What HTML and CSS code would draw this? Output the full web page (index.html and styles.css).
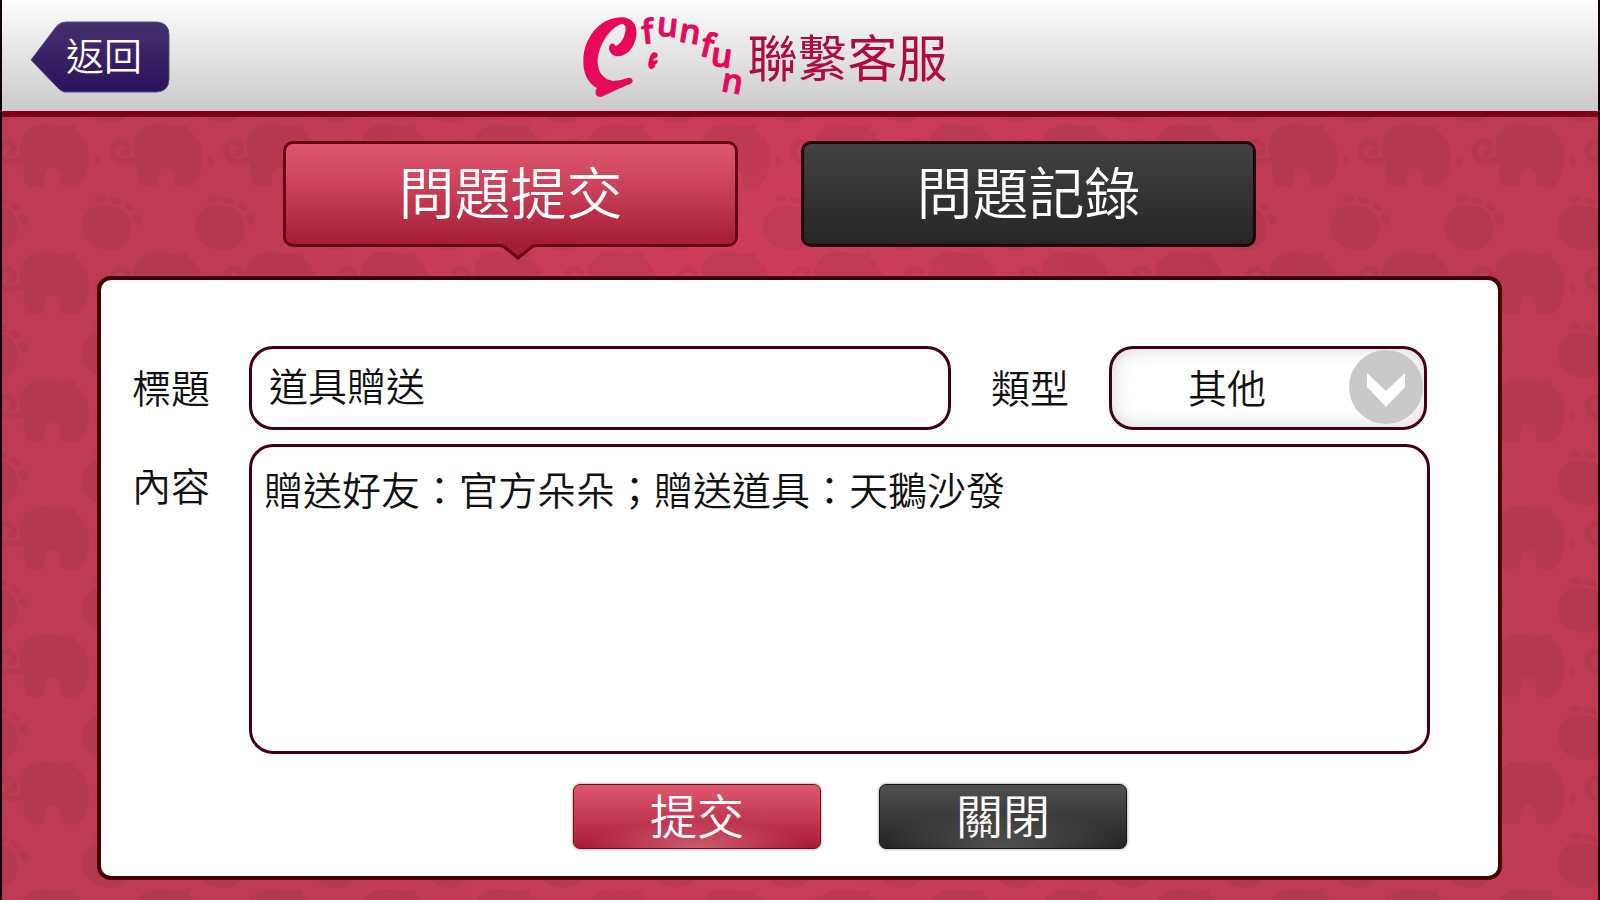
FILE: index.html
```html
<!DOCTYPE html>
<html lang="zh-Hant">
<head>
    <meta charset="UTF-8">
    <meta name="viewport" content="width=device-width, initial-scale=1.0">
    <title>聯繫客服</title>
    <link rel="stylesheet" href="styles.css">
</head>
<body>
    <header class="top-bar">
        <a class="back" href="#">
            <svg class="back-shape" viewBox="0 0 140 72" aria-hidden="true">
                <defs>
                    <linearGradient id="backFill" x1="0" y1="0" x2="0" y2="1">
                        <stop offset="0" stop-color="#462f70"/>
                        <stop offset="1" stop-color="#29125c"/>
                    </linearGradient>
                </defs>
                <path d="M1 39 L26 6 Q30 1 36 1 H127 Q139 2 139 14 V58 Q139 70 127 71 H34 Q31 70 28 67 Z" fill="url(#backFill)" stroke="#4a5680" stroke-width="1"/>
            </svg>
            <span class="back-text">返回</span>
        </a>
        <div class="brand">
            <svg class="logo" viewBox="70 45 480 249" role="img" aria-label="efunfun">
                <path d="M118 290 C104 288 106 272 112 265 C80 245 70 215 71 180 C72 120 115 52 188 52 C222 54 234 80 230 108 C224 145 200 170 172 169 C152 167 144 148 150 136 C156 126 166 132 168 138 C185 132 196 110 198 88 C199 74 192 70 180 74 C140 92 112 150 114 190 C116 225 140 240 160 243 C180 242 195 236 206 233 C220 232 224 246 212 252 C185 262 150 280 126 290 Z"/>
                <path d="M282 157 C294 156 297 166 292 172 L282 176 L281 183 L293 180 C297 186 290 192 286 194 C286 204 280 208 274 207 C265 204 264 194 268 180 C270 168 275 159 282 157 Z"/>
                <text x="249 289 355 417 450 482" y="132 106 124 166 196 272" rotate="-6 6 9 14 8 10">funfun</text>
            </svg>
            <h1>聯繫客服</h1>
        </div>
    </header>

    <main>
        <nav class="tabs">
            <button type="button" class="tab active">問題提交
                <svg class="pointer" viewBox="0 0 34 17" aria-hidden="true">
                    <path d="M0 0 H34 V2 L17 15 L0 2 Z" fill="#a51c35"/>
                    <path d="M0 2 H2 L17 14 L32 2 H34" fill="none" stroke="#65000b" stroke-width="3"/>
                </svg>
            </button>
            <button type="button" class="tab">問題記錄</button>
        </nav>

        <form class="panel">
            <div class="row">
                <label class="row-label" for="title">標題</label>
                <div class="fields">
                    <input type="text" id="title" value="道具贈送">
                    <label for="type">類型</label>
                    <div class="select-box">
                        <select id="type">
                            <option>其他</option>
                        </select>
                        <svg class="arrow" viewBox="0 0 74 74" aria-hidden="true">
                            <circle cx="37" cy="37" r="37" fill="#c9c9c9"/>
                            <path d="M18 23 L37 41 L56 23 V37 L37 57 L18 37 Z" fill="#fff"/>
                        </svg>
                    </div>
                </div>
            </div>
            <div class="row row-content">
                <label class="row-label" for="content">內容</label>
                <textarea id="content">贈送好友：官方朵朵；贈送道具：天鵝沙發</textarea>
            </div>
            <div class="actions">
                <button type="button" class="btn btn-submit">提交</button>
                <button type="button" class="btn btn-close">關閉</button>
            </div>
        </form>
    </main>
</body>
</html>
```
FILE: styles.css
```css
* { box-sizing: border-box; }
body {
    margin: 0;
    min-height: 100vh;
    display: flex;
    flex-direction: column;
    border: solid #120208;
    border-width: 0 2px;
    font-family: "Noto Sans CJK TC", sans-serif;
    font-weight: 350;
    color: #111;
}
button, input, select, textarea {
    font: inherit;
    color: inherit;
}

/* Header */
.top-bar {
    display: grid;
    grid-template-columns: 1fr auto 1fr;
    align-items: center;
    height: 117px;
    padding: 2px 98px 0 28px;
    background: linear-gradient(#fdfdfd, #cacaca);
    border-bottom: 6px solid #80001a;
}
.back {
    position: relative;
    width: 140px;
    height: 72px;
    padding-left: 36px;
    color: #fff;
    font-size: 38px;
    line-height: 66px;
    text-decoration: none;
}
.back-shape {
    position: absolute;
    inset: 0;
    width: 100%;
    height: 100%;
}
.back-text { position: relative; }
.brand {
    display: flex;
    align-items: center;
}
.logo {
    width: 160px;
    height: 83px;
    overflow: visible;
    fill: #e8085a;
    font-family: "Open Sans", sans-serif;
    font-size: 100px;
    font-weight: 600;
}
.logo text {
    stroke: #e8085a;
    stroke-width: 3px;
    stroke-linejoin: round;
}
h1 {
    margin: 0 0 4px 5px;
    color: #ad0b42;
    font-size: 50px;
    font-weight: 400;
    line-height: 60px;
}

/* Patterned area */
main {
    flex: 1;
    display: flex;
    flex-direction: column;
    padding: 24px 96px 20px 95px;
    background:
        url("data:image/svg+xml,%3Csvg xmlns='http://www.w3.org/2000/svg' width='227' height='255' viewBox='0 0 681 765'%3E%3Cdefs%3E%3Cg id='e'%3E%3Cpath d='M73 80C73 25 110 2 150 4C175 4 195 14 215 8L243 4L238 22C265 35 281 70 281 100C281 150 265 172 250 190C225 198 205 190 196 186V160C196 125 150 125 148 160L146 188C130 194 105 194 95 186C85 170 83 150 85 125Z'/%3E%3Cpath d='M36 90C52 96 64 78 52 64C38 48 12 56 10 84C10 114 45 124 95 104' fill='none' stroke='%23000' stroke-width='18'/%3E%3Cpath d='M295 105C308 98 316 108 314 118Q308 130 300 132Q302 118 295 105Z'/%3E%3C/g%3E%3Cg id='p'%3E%3Cpath d='M-55 258C-44 246 -28 246 -5 250C30 244 60 268 63 297C78 340 50 382 5 382C-45 382 -82 350 -82 310C-82 290 -70 270 -55 258Z'/%3E%3Cellipse cx='-27' cy='228' rx='19' ry='9'/%3E%3Cellipse cx='18' cy='233' rx='19' ry='10' transform='rotate(20 18 233)'/%3E%3Cellipse cx='60' cy='252' rx='17' ry='10' transform='rotate(45 60 252)'/%3E%3Cellipse cx='85' cy='289' rx='19' ry='12' transform='rotate(55 85 289)'/%3E%3C/g%3E%3Cg id='r'%3E%3Cuse href='%23e'/%3E%3Cuse href='%23e' x='340'/%3E%3Cuse href='%23p'/%3E%3Cuse href='%23p' x='340'/%3E%3Cuse href='%23p' x='681'/%3E%3C/g%3E%3C/defs%3E%3Cg opacity='.055'%3E%3Cuse href='%23r'/%3E%3Cuse href='%23r' y='382'/%3E%3C/g%3E%3C/svg%3E") 107px 6px / 227px 255px,
        radial-gradient(ellipse 36% 90% at 48% 45%, #d43d5f, #be3b53);
}
.tabs {
    display: flex;
    justify-content: center;
    gap: 63px;
    padding-right: 60px;
}
.tab {
    position: relative;
    width: 455px;
    height: 106px;
    padding: 0 0 8px;
    border: 3px solid #200003;
    border-radius: 10px;
    background: linear-gradient(#424242, #252525);
    color: #fff;
    font-size: 56px;
    line-height: 80px;
}
.tab.active {
    border-color: #65000b;
    background: linear-gradient(#e05870, #c94058 45%, #a51c35);
}
.pointer {
    position: absolute;
    left: 50%;
    top: 100%;
    width: 34px;
    height: 17px;
    margin-left: -10px;
}

/* Form */
.panel {
    flex: 1;
    margin-top: 29px;
    padding: 66px 68px 27px 31px;
    background: #fff;
    border: 4px solid #430005;
    border-radius: 14px;
    font-size: 39px;
    line-height: 56px;
}
.row {
    display: flex;
    align-items: center;
}
.row label { padding-bottom: 4px; }
.row-label { width: 117px; }
.row-content {
    align-items: flex-start;
    margin-top: 14px;
}
.row-content .row-label { padding-top: 12px; }
.fields {
    flex: 1;
    display: flex;
    align-items: center;
    gap: 40px;
    padding-right: 3px;
}
input, select, textarea {
    min-width: 0;
    border: 3px solid #430010;
    border-radius: 24px;
    background: #fff;
}
input {
    flex: 1;
    height: 84px;
    padding: 0 17px 8px;
}
.select-box {
    position: relative;
    width: 318px;
}
select {
    display: block;
    width: 100%;
    height: 84px;
    padding: 0 80px 4px 76px;
    appearance: none;
    box-shadow: inset 0 0 20px rgba(0, 0, 0, 0.16);
}
.arrow {
    position: absolute;
    right: 4px;
    top: 4px;
    width: 74px;
    height: 74px;
    pointer-events: none;
}
textarea {
    flex: 1;
    height: 310px;
    padding: 13px 12px;
    resize: none;
}

/* Buttons */
.actions {
    display: flex;
    justify-content: center;
    gap: 58px;
    margin-top: 30px;
    padding-left: 138px;
}
.btn {
    width: 248px;
    height: 65px;
    padding: 0 0 6px;
    border: 1px solid #6a1020;
    border-radius: 7px;
    box-shadow: 0 0 3px rgba(0, 0, 0, 0.5);
    color: #fff;
    font-size: 47px;
    line-height: 58px;
}
.btn-submit {
    background:
        radial-gradient(ellipse 45% 45% at 50% 100%, rgba(255, 190, 190, 0.4), transparent),
        linear-gradient(#e05870, #a91b37);
}
.btn-close {
    border-color: #151515;
    background:
        radial-gradient(ellipse 50% 60% at 50% 100%, rgba(255, 255, 255, 0.2), transparent),
        linear-gradient(#505050, #242424);
}
```
